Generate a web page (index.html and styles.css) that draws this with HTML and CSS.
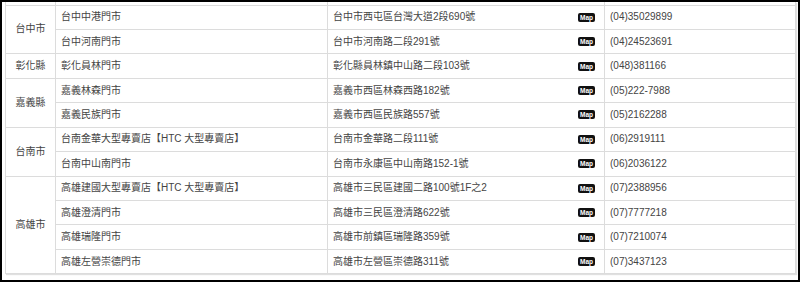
FILE: index.html
```html
<!DOCTYPE html>
<html lang="zh-Hant">
<head>
<meta charset="utf-8">
<title>門市資訊</title>
<link rel="stylesheet" href="styles.css">
</head>
<body>
<div class="frame">
  <table class="stores">
    <colgroup>
      <col class="c-city"><col class="c-name"><col class="c-addr"><col class="c-tel">
    </colgroup>
    <tr class="spacer"><td></td><td></td><td></td><td></td></tr>
    <tr><td class="city" rowspan="2">台中市</td><td>台中中港門市</td><td><div class="addr"><span>台中市西屯區台灣大道2段690號</span><span class="map">Map</span></div></td><td>(04)35029899</td></tr>
    <tr><td>台中河南門市</td><td><div class="addr"><span>台中市河南路二段291號</span><span class="map">Map</span></div></td><td>(04)24523691</td></tr>
    <tr><td class="city">彰化縣</td><td>彰化員林門市</td><td><div class="addr"><span>彰化縣員林鎮中山路二段103號</span><span class="map">Map</span></div></td><td>(048)381166</td></tr>
    <tr><td class="city" rowspan="2">嘉義縣</td><td>嘉義林森門市</td><td><div class="addr"><span>嘉義市西區林森西路182號</span><span class="map">Map</span></div></td><td>(05)222-7988</td></tr>
    <tr><td>嘉義民族門市</td><td><div class="addr"><span>嘉義市西區民族路557號</span><span class="map">Map</span></div></td><td>(05)2162288</td></tr>
    <tr><td class="city" rowspan="2">台南市</td><td>台南金華大型專賣店【HTC 大型專賣店】</td><td><div class="addr"><span>台南市金華路二段111號</span><span class="map">Map</span></div></td><td>(06)2919111</td></tr>
    <tr><td>台南中山南門市</td><td><div class="addr"><span>台南市永康區中山南路152-1號</span><span class="map">Map</span></div></td><td>(06)2036122</td></tr>
    <tr><td class="city" rowspan="4">高雄市</td><td>高雄建國大型專賣店【HTC 大型專賣店】</td><td><div class="addr"><span>高雄市三民區建國二路100號1F之2</span><span class="map">Map</span></div></td><td>(07)2388956</td></tr>
    <tr><td>高雄澄清門市</td><td><div class="addr"><span>高雄市三民區澄清路622號</span><span class="map">Map</span></div></td><td>(07)7777218</td></tr>
    <tr><td>高雄瑞隆門市</td><td><div class="addr"><span>高雄市前鎮區瑞隆路359號</span><span class="map">Map</span></div></td><td>(07)7210074</td></tr>
    <tr><td>高雄左營崇德門市</td><td><div class="addr"><span>高雄市左營區崇德路311號</span><span class="map">Map</span></div></td><td>(07)3437123</td></tr>
  </table>
</div>
</body>
</html>
```

FILE: styles.css
```css
html, body {
  margin: 0;
  padding: 0;
  background: #fff;
}
.frame {
  width: 800px;
  height: 282px;
  box-sizing: border-box;
  border: 2px solid #000;
  overflow: hidden;
  background: #fff;
  padding: 0 3px;
}
.stores {
  width: 790px;
  border-collapse: collapse;
  table-layout: fixed;
  font-family: "Liberation Sans", "Noto Sans CJK TC", sans-serif;
  font-size: 10px;
  color: #444;
  box-shadow: 1px 1px 1px rgba(0,0,0,0.12);
}
.c-city { width: 50px; }
.c-name { width: 272px; }
.c-addr { width: 277px; }
.c-tel { width: 191px; }
.stores td {
  border: 1px solid #dcdcdc;
  height: 24.45px;
  padding: 0 0 0 5px;
  vertical-align: middle;
  white-space: nowrap;
  line-height: 12px;
  box-sizing: border-box;
}
.stores td.city {
  text-align: center;
  padding: 0;
}
.stores .spacer td {
  height: 3px;
  border-top: none;
}
.addr {
  display: flex;
  align-items: center;
  justify-content: space-between;
  padding-right: 9px;
}
.map {
  display: inline-block;
  background: #111;
  color: #fff;
  font-size: 6.5px;
  line-height: 9px;
  height: 9px;
  padding: 0 2px;
  border-radius: 2px;
  font-weight: bold;
}
```
